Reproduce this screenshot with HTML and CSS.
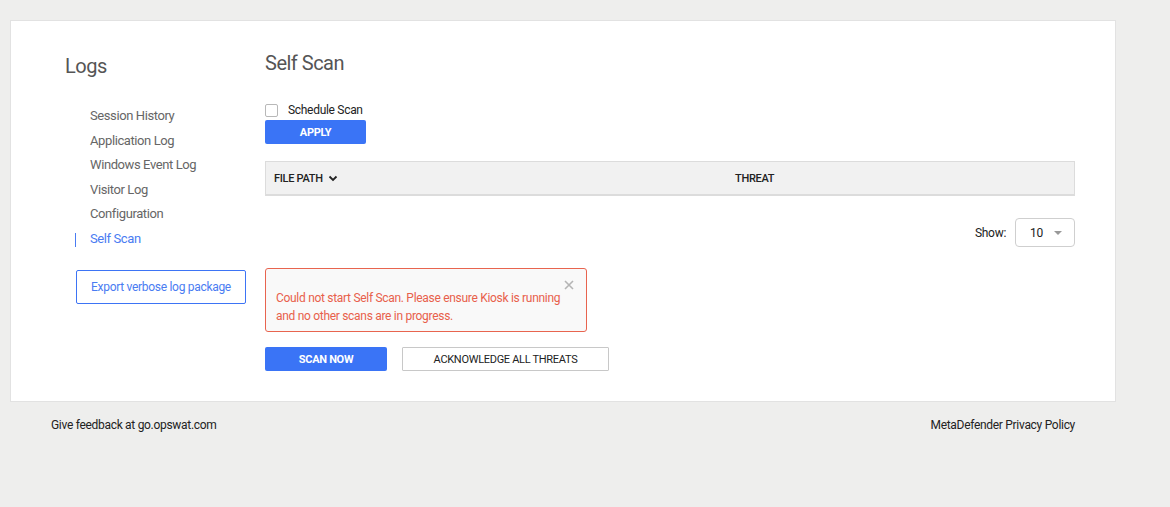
FILE: index.html
```html
<!DOCTYPE html>
<html>
<head>
<meta charset="utf-8">
<link rel="stylesheet" href="styles.css">
</head>
<body>
<div class="page">
  <div class="card">
    <aside class="sidebar">
      <h2 class="side-title">Logs</h2>
      <ul class="nav">
        <li class="nav-item">Session History</li>
        <li class="nav-item">Application Log</li>
        <li class="nav-item">Windows Event Log</li>
        <li class="nav-item">Visitor Log</li>
        <li class="nav-item">Configuration</li>
        <li class="nav-item active">Self Scan</li>
      </ul>
      <button class="export-btn">Export verbose log package</button>
    </aside>
    <main class="main">
      <h1 class="title">Self Scan</h1>
      <label class="check-row"><span class="checkbox"></span><span>Schedule Scan</span></label>
      <button class="btn-primary apply">APPLY</button>
      <div class="table-head">
        <div class="col col-path">FILE PATH
          <svg class="chev" width="10" height="7" viewBox="0 0 10 7"><path d="M1.5 1.5 L5 5 L8.5 1.5" fill="none" stroke="#222" stroke-width="1.8"/></svg>
        </div>
        <div class="col col-threat">THREAT</div>
      </div>
      <div class="show-row">
        <span class="show-label">Show:</span>
        <div class="select"><span>10</span><span class="caret"></span></div>
      </div>
      <div class="alert">
        <span class="close">
          <svg width="10" height="10" viewBox="0 0 10 10"><path d="M1 1 L9 9 M9 1 L1 9" stroke="#b5b5b5" stroke-width="1.6"/></svg>
        </span>
        <p class="alert-text">Could not start Self Scan. Please ensure Kiosk is running and no other scans are in progress.</p>
      </div>
      <div class="actions">
        <button class="btn-primary scan">SCAN NOW</button>
        <button class="btn-outline ack">ACKNOWLEDGE ALL THREATS</button>
      </div>
    </main>
  </div>
  <footer class="footer">
    <span>Give feedback at go.opswat.com</span>
    <span>MetaDefender Privacy Policy</span>
  </footer>
</div>
</body>
</html>
```
FILE: styles.css
```css
* { box-sizing: border-box; }
html, body { margin: 0; padding: 0; }
body {
  background: #eeeeed;
  font-family: "Roboto", "Liberation Sans", sans-serif;
  color: #222;
  letter-spacing: -0.3px;
}
.page {
  width: 1106px;
  margin-left: 10px;
  padding-top: 20px;
}
.card {
  background: #fff;
  border: 1px solid #e2e2e2;
  display: flex;
  padding: 30px 40px 30px 54px;
}
.sidebar {
  width: 200px;
  flex: none;
  display: flex;
  flex-direction: column;
  align-items: flex-start;
}
.side-title {
  margin: 3px 0 0 0;
  font-size: 20px;
  font-weight: 400;
  line-height: 24px;
  color: #555;
  letter-spacing: -0.5px;
}
.nav {
  list-style: none;
  margin: 26px 0 0 10px;
  padding: 0;
}
.nav-item {
  font-size: 13px;
  line-height: 24.5px;
  height: 24.5px;
  color: #666;
  padding-left: 14px;
  border-left: 1px solid transparent;
  letter-spacing: -0.4px;
}
.nav-item.active {
  color: #4a7cf2;
  position: relative;
}
.nav-item.active::before {
  content: "";
  position: absolute;
  left: -1px;
  top: 6px;
  height: 14px;
  width: 1px;
  background: #4a7cf2;
}
.export-btn {
  margin: 19px 0 0 11px;
  width: 170px;
  height: 34px;
  background: #fff;
  border: 1px solid #3d74f5;
  border-radius: 2px;
  color: #4a7cf2;
  font-family: inherit;
  font-size: 12px;
  letter-spacing: -0.3px;
  padding: 0;
}
.main {
  flex: 1;
  min-width: 0;
}
.title {
  margin: 0;
  font-size: 20px;
  font-weight: 400;
  line-height: 24px;
  color: #555;
  letter-spacing: -0.5px;
}
.check-row {
  display: flex;
  align-items: center;
  gap: 10px;
  margin-top: 28px;
  font-size: 12px;
  line-height: 14px;
  color: #222;
}
.checkbox {
  width: 13px;
  height: 13px;
  border: 1px solid #b8b8b8;
  border-radius: 2px;
  background: #fff;
}
.btn-primary {
  background: #3a74f6;
  color: #fff;
  border: none;
  border-radius: 2px;
  font-family: inherit;
  font-weight: 700;
  font-size: 11px;
  letter-spacing: -0.3px;
  padding: 0;
}
.apply {
  margin-top: 3px;
  width: 101px;
  height: 24px;
  display: block;
}
.table-head {
  margin-top: 17px;
  display: flex;
  height: 35px;
  background: #f1f1f1;
  border: 1px solid #dcdcdc;
  border-bottom-width: 2px;
  align-items: center;
  font-size: 11px;
  font-weight: 500;
  color: #222;
}
.col-path {
  width: 469px;
  padding-left: 8px;
  display: flex;
  align-items: center;
  gap: 5px;
}
.show-row {
  margin-top: 22px;
  display: flex;
  justify-content: flex-end;
  align-items: center;
  gap: 9px;
  font-size: 12px;
}
.select {
  width: 60px;
  height: 29px;
  border: 1px solid #cfcfcf;
  border-radius: 4px;
  display: flex;
  align-items: center;
  padding-left: 14px;
  gap: 11px;
  font-size: 12px;
}
.caret {
  width: 0;
  height: 0;
  border-left: 4px solid transparent;
  border-right: 4px solid transparent;
  border-top: 4px solid #999;
}
.alert {
  margin-top: 21px;
  width: 322px;
  height: 64px;
  border: 1px solid #e8644f;
  border-radius: 3px;
  background: #f9f9f9;
  position: relative;
  padding: 20px 10px 0 10px;
}
.close {
  position: absolute;
  right: 12px;
  top: 11px;
  line-height: 0;
}
.alert-text {
  margin: 0;
  color: #e8604b;
  font-size: 12px;
  line-height: 18px;
}
.actions {
  margin-top: 15px;
  display: flex;
  gap: 15px;
}
.scan {
  width: 122px;
  height: 24px;
}
.btn-outline {
  background: #fff;
  border: 1px solid #c8c8c8;
  border-radius: 1px;
  font-family: inherit;
  font-size: 11px;
  letter-spacing: -0.3px;
  color: #222;
  padding: 0;
}
.ack {
  width: 207px;
  height: 24px;
}
.footer {
  display: flex;
  justify-content: space-between;
  padding: 16px 41px 0 41px;
  font-size: 12px;
  color: #222;
}
```
